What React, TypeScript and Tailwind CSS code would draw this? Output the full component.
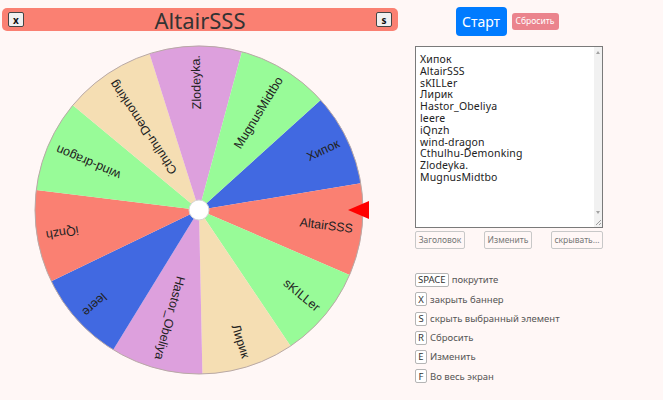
import React from 'react';

const names = [
  'Хипок',
  'AltairSSS',
  'sKILLer',
  'Лирик',
  'Hastor_Obeliya',
  'leere',
  'iQnzh',
  'wind-dragon',
  'Cthulhu-Demonking',
  'Zlodeyka.',
  'MugnusMidtbo',
];

const colors = [
  '#4169e1',
  '#fa8072',
  '#98fb98',
  '#f5deb3',
  '#dda0dd',
  '#4169e1',
  '#fa8072',
  '#98fb98',
  '#f5deb3',
  '#dda0dd',
  '#98fb98',
];

const shortcuts = [
  { key: 'SPACE', label: 'покрутите' },
  { key: 'X', label: 'закрыть баннер' },
  { key: 'S', label: 'скрыть выбранный элемент' },
  { key: 'R', label: 'Сбросить' },
  { key: 'E', label: 'Изменить' },
  { key: 'F', label: 'Во весь экран' },
];

const R = 164;
const START = -42.1;
const STEP = 360 / names.length;

function pt(deg: number, r: number) {
  const a = (deg * Math.PI) / 180;
  return [r * Math.cos(a), r * Math.sin(a)];
}

function Wheel() {
  return (
    <svg width="340" height="340" viewBox="-170 -170 340 340">
      <g>
        {names.map((name, i) => {
          const a1 = START + i * STEP;
          const a2 = a1 + STEP;
          const [x1, y1] = pt(a1, R);
          const [x2, y2] = pt(a2, R);
          return (
            <path
              key={name}
              d={`M0 0 L${x1} ${y1} A${R} ${R} 0 0 1 ${x2} ${y2} Z`}
              fill={colors[i]}
            />
          );
        })}
        <circle r={R} fill="none" stroke="#b9a9a6" strokeWidth="1" />
        {names.map((name, i) => {
          const mid = START + i * STEP + STEP / 2;
          return (
            <text
              key={name + '-t'}
              x={155}
              y={0}
              transform={`rotate(${mid})`}
              textAnchor="end"
              dominantBaseline="central"
              fontFamily="'Liberation Sans', Arial, sans-serif"
              fontSize="12.5"
              fill="#222"
            >
              {name}
            </text>
          );
        })}
        <circle r="10" fill="#fff" stroke="#d6d6d6" strokeWidth="1" />
      </g>
      {/* pointer */}
      <polygon points="149,0 170,-9 170,9" fill="#ff0000" />
    </svg>
  );
}

function Kbd({ children }: { children: React.ReactNode }) {
  return (
    <span className="inline-flex h-[14px] min-w-[12px] items-center justify-center rounded-[2px] border border-[#b5b5b5] bg-white px-[2px] text-[9.5px] leading-none text-[#333]">
      {children}
    </span>
  );
}

export default function App() {
  return (
    <div
      className="flex h-[400px] w-[663px] overflow-hidden bg-[#fff7f6]"
      style={{ fontFamily: "'Noto Sans', 'Open Sans', sans-serif" }}
    >
      {/* wheel column */}
      <div className="flex w-[400px] flex-col">
        <div className="mx-[2px] mt-[8px] flex h-[23px] items-center justify-between rounded-[5px] bg-[#fa8072] px-[6px]">
          <span className="flex h-[15px] w-[16px] items-center justify-center rounded-[2px] border border-[#444] bg-[#f0f0f0] text-[10px] font-bold leading-none text-[#111]">
            x
          </span>
          <span className="text-[22px] leading-none text-[#333]">AltairSSS</span>
          <span className="flex h-[15px] w-[16px] items-center justify-center rounded-[2px] border border-[#444] bg-[#f0f0f0] text-[10px] font-bold leading-none text-[#111]">
            s
          </span>
        </div>
        <div className="mt-[9px] pl-[29px]">
          <Wheel />
        </div>
      </div>

      {/* controls column */}
      <div className="ml-[15px] flex w-[188px] flex-col">
        <div className="mt-[7px] flex items-center justify-center gap-[5px] pr-[4px]">
          <button className="h-[29px] w-[51px] rounded-[4px] bg-[#007bff] text-[14px] text-white">
            Старт
          </button>
          <button className="h-[17px] w-[47px] rounded-[3px] bg-[#eb848d] text-[8.5px] text-white">
            Сбросить
          </button>
        </div>

        <div className="mt-[10px] flex h-[182px] border border-[#7a7a7a] bg-white">
          <div className="flex-1 pl-[4px] pt-[7px] text-[10.5px] leading-[11.8px] tracking-[0.15px] text-[#222]">
            {names.map((n) => (
              <div key={n}>{n}</div>
            ))}
          </div>
          <div className="flex w-[8px] flex-col items-center justify-between bg-[#f1f1f1] pb-[1px] pt-[4px]">
            <span className="h-0 w-0 border-x-[2.5px] border-b-[3px] border-x-transparent border-b-[#a3a3a3]" />
            <div className="flex flex-col items-center gap-[5px]">
              <span className="h-0 w-0 border-x-[2.5px] border-t-[3px] border-x-transparent border-t-[#a3a3a3]" />
              <svg width="7" height="7" viewBox="0 0 7 7">
                <path d="M6 1 L1 6 M6 4 L4 6" stroke="#888" strokeWidth="0.8" />
              </svg>
            </div>
          </div>
        </div>

        <div className="mt-[3px] flex justify-between text-[8.5px] text-[#777]">
          <button className="h-[18px] w-[50px] rounded-[2px] border border-[#c8c8c8]">Заголовок</button>
          <button className="h-[18px] w-[48px] rounded-[2px] border border-[#c8c8c8]">Изменить</button>
          <button className="h-[18px] w-[52px] rounded-[2px] border border-[#c8c8c8]">скрывать...</button>
        </div>

        <div className="mt-[24px] flex flex-col gap-[5.3px]">
          {shortcuts.map((s) => (
            <div key={s.key} className="flex items-center gap-[3px] text-[9.5px] leading-none text-[#555]">
              <Kbd>{s.key}</Kbd>
              <span>{s.label}</span>
            </div>
          ))}
        </div>
      </div>
    </div>
  );
}
